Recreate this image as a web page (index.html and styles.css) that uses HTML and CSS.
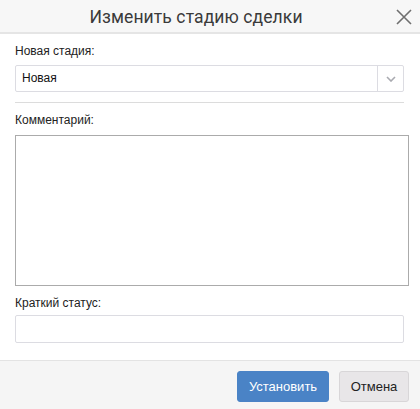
FILE: index.html
```html
<!DOCTYPE html>
<html>
<head>
<meta charset="utf-8">
<link rel="stylesheet" href="styles.css">
</head>
<body>
<div class="dialog">
  <div class="header">
    <div class="title">Изменить стадию сделки</div>
    <svg class="close" width="16" height="16" viewBox="0 0 16 16"><path d="M1 1 L15 15 M15 1 L1 15" stroke="#6f6f6f" stroke-width="1.6" fill="none"/></svg>
  </div>
  <div class="body">
    <div class="label l1">Новая стадия:</div>
    <div class="select">
      <div class="value">Новая</div>
      <div class="arrow"><svg width="10" height="6" viewBox="0 0 10 6"><path d="M1 1 L5 5 L9 1" stroke="#a9aab0" stroke-width="1.6" fill="none"/></svg></div>
    </div>
    <div class="sep"></div>
    <div class="label l2">Комментарий:</div>
    <div class="textarea"></div>
    <div class="label l3">Краткий статус:</div>
    <div class="input"></div>
  </div>
  <div class="footer">
    <button class="btn primary">Установить</button>
    <button class="btn secondary">Отмена</button>
  </div>
</div>
</body>
</html>
```
FILE: styles.css
```css
html, body { margin: 0; padding: 0; background: #fff; }
body { font-family: "Liberation Sans", Arial, sans-serif; font-size: 12px; color: #222; }
.dialog { width: 420px; height: 409px; display: flex; flex-direction: column; }
.header { height: 32px; background: #f7f7f7; border-bottom: 2px solid #e5e5e5; position: relative; display: flex; align-items: center; justify-content: center; padding-right: 28px; }
.title { font-family: Roboto, "Noto Sans", sans-serif; font-size: 17.5px; color: #3a3a3a; padding-top: 1px; letter-spacing: 0.1px; }
.close { position: absolute; right: 8px; top: 9px; }
.body { flex: 1; padding: 0 15px 0 15px; display: flex; flex-direction: column; }
.label { line-height: 14px; color: #222; }
.l1 { margin-top: 10px; }
.select { margin-top: 7px; width: 389px; height: 27px; box-sizing: border-box; border: 1px solid #dcdce2; border-radius: 2px; display: flex; background: #fff; }
.value { flex: 1; padding-left: 6px; line-height: 25px; font-size: 12px; color: #111; }
.arrow { width: 25px; border-left: 1px solid #dcdce2; display: flex; align-items: center; justify-content: center; }
.sep { margin-top: 10px; width: 389px; height: 1px; background: #dcdcdc; }
.l2 { margin-top: 10px; }
.textarea { margin-top: 8px; width: 394px; height: 151px; box-sizing: border-box; border: 1px solid #ababab; background: #fff; }
.l3 { margin-top: 10px; }
.input { margin-top: 5px; width: 389px; height: 28px; box-sizing: border-box; border: 1px solid #dcdce2; border-radius: 2px; background: #fff; }
.footer { height: 49px; border-top: 1px solid #e3e3e3; background: #f5f5f5; display: flex; justify-content: flex-end; align-items: flex-start; padding: 10px 11px 0 0; box-sizing: border-box; gap: 10px; }
.btn { height: 31px; border-radius: 3px; font-family: "Liberation Sans", Arial, sans-serif; font-size: 13px; padding: 0; margin: 0; }
.primary { width: 92px; background: #4a83c6; color: #fff; border: 1px solid #4a83c6; }
.secondary { width: 70px; background: #e8e6e8; color: #222; border: 1px solid #d8d6d8; }
```
